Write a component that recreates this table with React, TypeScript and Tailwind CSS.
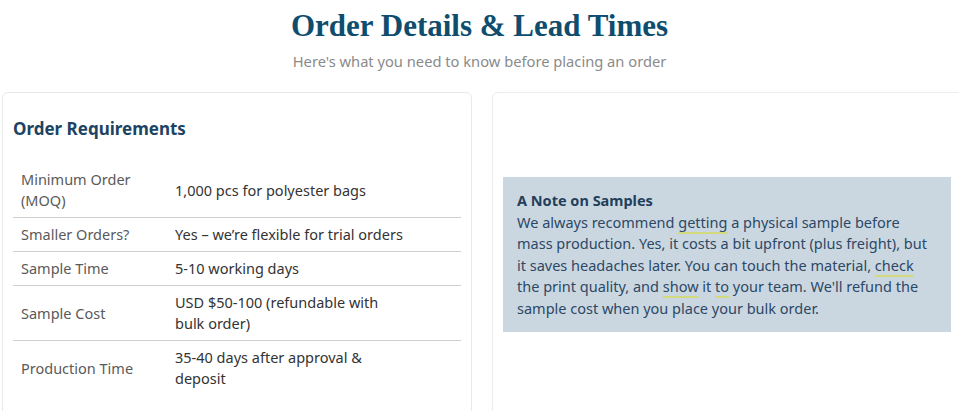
import React from 'react';

const rows: { label: string; value: string }[] = [
  { label: 'Minimum Order (MOQ)', value: '1,000 pcs for polyester bags' },
  { label: 'Smaller Orders?', value: 'Yes – we’re flexible for trial orders' },
  { label: 'Sample Time', value: '5-10 working days' },
  { label: 'Sample Cost', value: 'USD $50-100 (refundable with bulk order)' },
  { label: 'Production Time', value: '35-40 days after approval & deposit' },
];

const Mark: React.FC<{ children: React.ReactNode }> = ({ children }) => (
  <span className="underline decoration-[#d3da7e] decoration-2 underline-offset-[4px]">{children}</span>
);

const App: React.FC = () => {
  return (
    <div className="w-[959px] h-[411px] overflow-hidden bg-white font-['Noto_Sans',sans-serif]">
      {/* Header */}
      <div className="text-center pt-[6px]">
        <h1 className="font-['Liberation_Serif',serif] font-bold text-[31px] leading-[40px] text-[#0f4d6e]">
          Order Details &amp; Lead Times
        </h1>
        <p className="mt-[4px] text-[14.7px] leading-[22px] text-[#8a8a8a]">
          Here's what you need to know before placing an order
        </p>
      </div>

      <div className="flex gap-[20px] pl-[2px] mt-[20px]">
        {/* Order Requirements */}
        <div className="w-[470px] shrink-0 h-[330px] border border-[#e9e9e9] rounded-[6px] px-[10px] pt-[24px]">
          <h3 className="text-[17px] leading-[24px] font-bold text-[#1c4462]">Order Requirements</h3>
          <div className="mt-[22px]">
            {rows.map((row, i) => (
              <div
                key={row.label}
                className={`grid grid-cols-[154px_248px_1fr] items-center text-[14.5px] leading-[21px] ${
                  i < rows.length - 1 ? 'border-b border-[#cfcfcf]' : ''
                }`}
              >
                <div className="pl-[8px] pr-[22px] py-[6px] text-[#5a5a5a]">{row.label}</div>
                <div className="px-[8px] py-[6px] text-[#333]">{row.value}</div>
                <div />
              </div>
            ))}
          </div>
        </div>

        {/* Note */}
        <div className="w-[470px] shrink-0 h-[330px] border border-[#ececec] rounded-[6px] px-[10px] pt-[84px]">
          <div className="bg-[#cbd7e0] px-[14px] pt-[13px] pb-[13px] text-[14.5px] leading-[21.5px] text-[#2b4866]">
            <div className="font-bold text-[#1f3f5c]">A Note on Samples</div>
            <p>
              We always recommend <Mark>getting</Mark> a physical sample before mass production. Yes, it costs a
              bit upfront (plus freight), but it saves headaches later. You can touch the material,{' '}
              <Mark>check</Mark> the print quality, and <Mark>show</Mark> it <Mark>to</Mark> your team. We'll refund
              the sample cost when you place your bulk order.
            </p>
          </div>
        </div>
      </div>
    </div>
  );
};

export default App;
